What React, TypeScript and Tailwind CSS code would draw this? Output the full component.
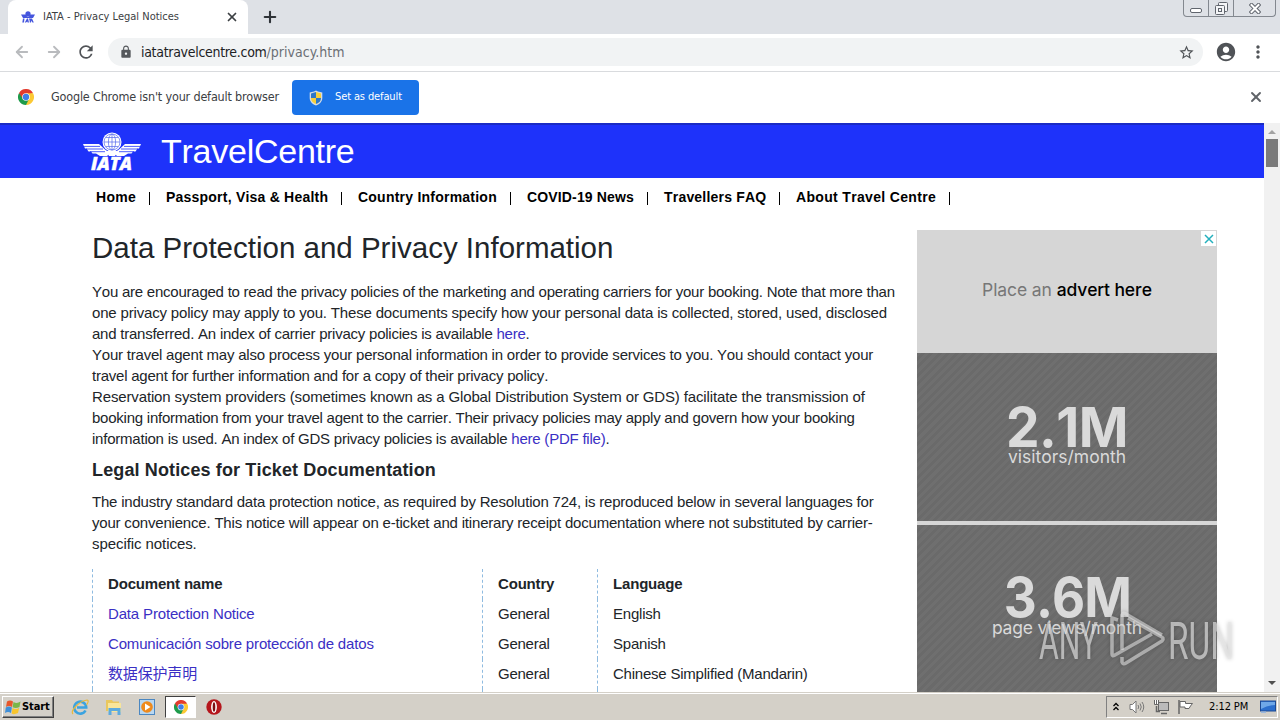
import { ArrowLeft, ArrowRight, Plus, X } from "lucide-react";
import { MdAccountCircle, MdLock, MdMoreVert, MdRefresh, MdStarBorder } from "react-icons/md";

const navItems = [
  { label: "Home", className: "w-[70px] tracking-[0.28px]" },
  { label: "Passport, Visa & Health", className: "w-[192px] tracking-[0.22px]" },
  { label: "Country Information", className: "w-[169px] tracking-[0.23px]" },
  { label: "COVID-19 News", className: "w-[137px] tracking-[0.15px]" },
  { label: "Travellers FAQ", className: "w-[132px] tracking-[0.2px]" },
  { label: "About Travel Centre", className: "w-[170px] tracking-[0.33px]" },
];

const rows = [
  { name: "Data Protection Notice", country: "General", language: "English" },
  { name: "Comunicación sobre protección de datos", country: "General", language: "Spanish" },
  { name: "数据保护声明", country: "General", language: "Chinese Simplified (Mandarin)" },
];

function ChromeLogo({ className }: { className: string }) {
  return (
    <svg viewBox="0 0 48 48" className={className}>
      <path d="M24 24 3.2 12A24 24 0 0 1 44.8 12Z" fill="#e33b2e" />
      <path d="M24 24 44.8 12A24 24 0 0 1 24 48Z" fill="#fcc934" />
      <path d="M24 24 24 48A24 24 0 0 1 3.2 12Z" fill="#1e9b4b" />
      <path d="M24 13H44.8L34 30Z" fill="#fcc934" />
      <path d="M14.5 29.5 3.2 12 24 13Z" fill="#e33b2e" />
      <path d="M33.5 29.5 24 48 14.5 29.5Z" fill="#1e9b4b" />
      <circle cx="24" cy="24" r="11.5" fill="#fff" />
      <circle cx="24" cy="24" r="9.5" fill="#3f7ee8" />
    </svg>
  );
}

function IataLogo({ className }: { className: string }) {
  return (
    <svg viewBox="0 0 58 40" className={className}>
      <g fill="#fff">
        <path d="M0 12H16L22 17.5 27 21 24 24H17L13 21.500H9.500L8 19.500H5.500L3.500 16.500H2Z" />
        <path d="M58 12H42L36 17.5 31 21 34 24H41L45 21.500H48.500L50 19.500H52.500L54.500 16.500H56Z" />
        <circle cx="29" cy="10" r="9.5" />
        <path d="M23 19H35L32 24H26Z" />
      </g>
      <g fill="none" stroke="#5468ec" strokeWidth="0.7">
        <circle cx="29" cy="10" r="8" />
        <ellipse cx="29" cy="10" rx="3.6" ry="8" />
        <path d="M29 2V18M21 10H37M23 5.5H35M23 14.5H35" />
      </g>
      <path d="M1 14.400H17M3 17H20M7 19.700H22M57 14.400H41M55 17H38M51 19.700H36" stroke="#1e32fa" strokeWidth="0.8" />
      <text
        x="8"
        y="38"
        textLength="41"
        lengthAdjust="spacingAndGlyphs"
        fill="#fff"
        stroke="#fff"
        strokeWidth="0.4"
        className="font-['Open_Sans',sans-serif] text-[17px] font-extrabold italic"
      >
        IATA
      </text>
    </svg>
  );
}

function TabIcon() {
  return (
    <svg viewBox="0 0 16 12" className="h-3 w-4" fill="#4455dd">
      <path d="M1 3.5H6L7 5.5H9L10 3.5H15L13 7H3Z" />
      <circle cx="8" cy="2.8" r="2.6" />
      <path d="M3 7.5H4.5L4 11.5H2.3ZM7 7.5H8L9 11.5H7.6L7.3 10.5 6 11.5H4.8ZM8.8 7.5H12L13.8 11.5H12.4L11.4 9.5 11 11.5H9.8L9.5 9Z" />
    </svg>
  );
}

function ShieldIcon() {
  return (
    <svg viewBox="0 0 14 16" className="h-4 w-3.5">
      <path d="M7 .5 9 1.500 13.3 2.5V8C13.3 12 10 14.5 7 15.6 4 14.5.7 12 .7 8V2.5L5 1.500Z" fill="#d6dce4" />
      <path d="M7 2V8H2V3.5Z" fill="#2d77c9" />
      <path d="M7 2V8H12V3.5Z" fill="#f6cf3c" />
      <path d="M7 14V8H2C2 11.5 4.5 13 7 14Z" fill="#f6cf3c" />
      <path d="M7 14V8H12C12 11.5 9.500 13 7 14Z" fill="#2d77c9" />
    </svg>
  );
}

function WindowButtons() {
  return (
    <div className="absolute top-0 right-[4px] flex h-[17px] w-[93px] rounded-b-[4px] border border-t-0 border-[#83888f]">
      <div className="flex w-[25px] items-end justify-center border-r border-[#83888f] pb-[3px]">
        <div className="h-[5px] w-3 rounded-[2px] border border-[#60656d] bg-white" />
      </div>
      <div className="flex w-[25px] items-center justify-center border-r border-[#83888f]">
        <svg viewBox="0 0 13 13" className="h-[13px] w-[13px]" fill="#f4f5f7" stroke="#60656d">
          <rect x="3.500" y=".5" width="9" height="9" rx="1" />
          <rect x=".5" y="3.500" width="9" height="9" rx="1" />
          <rect x="3.500" y="6.500" width="3" height="3" />
        </svg>
      </div>
      <div className="flex flex-1 items-center justify-center">
        <svg viewBox="0 0 12 11" className="h-[11px] w-3">
          <path d="M2.500 2 9.500 9M9.500 2 2.500 9" stroke="#60656d" strokeWidth="4" strokeLinecap="square" />
          <path d="M2.500 2 9.500 9M9.500 2 2.500 9" stroke="#fff" strokeWidth="2" strokeLinecap="square" />
        </svg>
      </div>
    </div>
  );
}

function BrowserChrome() {
  return (
    <div className="shrink-0">
      <div className="relative flex h-[34px] bg-[#dee1e6]">
        <div className="ml-2 flex w-[240px] items-center rounded-t-lg bg-white pl-3">
          <TabIcon />
          <span className="ml-[7px] flex-1 text-[11px] whitespace-nowrap text-[#3c4043]">
            IATA - Privacy Legal Notices
          </span>
          <X className="mr-[9px] h-[14px] w-[14px] text-[#3c4043]" strokeWidth={3} />
        </div>
        <Plus className="mt-2 ml-[13px] h-[18px] w-[18px] text-[#2f3338]" strokeWidth={2.800} />
        <WindowButtons />
      </div>

      <div className="flex h-[38px] items-center border-b border-[#d9dbde] bg-white pb-px">
        <ArrowLeft className="ml-[13px] h-[18px] w-[18px] text-[#b9bbbe]" strokeWidth={2.4} />
        <ArrowRight className="ml-[14px] h-[18px] w-[18px] text-[#b9bbbe]" strokeWidth={2.4} />
        <MdRefresh className="ml-[13px] h-5 w-5 text-[#505357]" />
        <div className="ml-3 flex h-7 w-[1095px] items-center rounded-full bg-[#f1f3f4]">
          <MdLock className="ml-[11px] h-[14px] w-[14px] text-[#55585c]" />
          <span className="ml-2 flex-1 text-[14px] tracking-[-0.3px] whitespace-nowrap text-[#202124]">
            iatatravelcentre.com<span className="tracking-[0.02px] text-[#6b6f74]">/privacy.htm</span>
          </span>
          <MdStarBorder className="mr-[8px] h-[17px] w-[17px] text-[#505357]" />
        </div>
        <MdAccountCircle className="ml-3 h-[22px] w-[22px] text-[#505357]" />
        <MdMoreVert className="ml-[11px] h-5 w-5 text-[#505357]" />
      </div>

      <div className="flex h-[51px] items-center bg-white pb-px">
        <ChromeLogo className="ml-[18px] h-4 w-4" />
        <span className="ml-[17px] w-[241px] text-[12.500px] tracking-[-0.18px] whitespace-nowrap text-[#3c4043]">
          Google Chrome isn't your default browser
        </span>
        <button className="mt-px flex h-[35px] w-[127px] items-center rounded-[4px] bg-[#1a73e8] pl-[17px] text-white">
          <ShieldIcon />
          <span className="ml-3 text-[11px] tracking-[-0.12px] whitespace-nowrap">Set as default</span>
        </button>
        <X className="mr-[16px] ml-auto h-4 w-4 text-[#5f6368]" strokeWidth={2.800} />
      </div>
    </div>
  );
}

function Advert() {
  return (
    <div className="mt-[52px] h-[462px] w-[300px] shrink-0 overflow-hidden bg-[#d6d6d6] font-['Inter',sans-serif]">
      <div className="relative flex h-[123px] items-center justify-center pb-[2px] text-[17.500px] whitespace-nowrap text-[#777]">
        <span className="tracking-[-0.1px]">
          Place an <span className="font-medium text-black">advert here</span>
        </span>
        <div className="absolute top-px right-px flex h-[15px] w-[15px] items-center justify-center bg-white">
          <svg viewBox="0 0 10 10" className="h-[10px] w-[10px]">
            <path d="M1 1 9 9M9 1 1 9" stroke="#24b0bd" strokeWidth="1.5" />
          </svg>
        </div>
      </div>
      <div className="mb-1 flex h-[168px] flex-col items-center bg-[repeating-linear-gradient(135deg,#6f6f6f_0_3px,#6a6a6a_3px_6px)] pt-[55px] text-[#dadada]">
        <div className="scale-x-[0.97] text-[55px] leading-[39px] font-bold tracking-[-0.5px]">2.1M</div>
        <div className="text-[17.500px] leading-5">visitors/month</div>
      </div>
      <div className="flex h-[168px] flex-col items-center bg-[repeating-linear-gradient(135deg,#6f6f6f_0_3px,#6a6a6a_3px_6px)] pt-[53px] text-[#dadada]">
        <div className="scale-x-[0.93] text-[55px] leading-[39px] font-bold tracking-[-1px]">3.6M</div>
        <div className="text-[17.500px] leading-[22px] tracking-[-0.17px]">page views/month</div>
      </div>
    </div>
  );
}

function Scrollbar() {
  return (
    <div className="flex w-4 flex-col items-center bg-[#f1f1f1]">
      <svg viewBox="0 0 16 16" className="h-4 w-4">
        <path d="M4 11 8 7 12 11Z" fill="#a3a3a3" />
      </svg>
      <div className="h-7 w-3 bg-[#7b7b7b]" />
      <svg viewBox="0 0 16 16" className="mt-auto h-4 w-4">
        <path d="M4 5 8 9 12 5Z" fill="#505050" />
      </svg>
    </div>
  );
}

function Watermark() {
  return (
    <svg
      viewBox="0 0 200 66"
      className="absolute top-[606px] left-[1036px] h-[66px] w-[200px] overflow-visible [filter:drop-shadow(0_0_2px_rgba(0,0,0,0.35))]"
    >
      <g fill="#e6e6e6" fillOpacity="0.65" className="font-['Roboto',sans-serif] text-[52px] font-normal">
        <text x="3" y="53" textLength="59" lengthAdjust="spacingAndGlyphs">ANY</text>
        <text x="132" y="53" textLength="66" lengthAdjust="spacingAndGlyphs">RUN</text>
      </g>
      <g fill="none" stroke="#e0e0e0" strokeOpacity="0.6" strokeWidth="3.500" strokeLinejoin="round">
        <path d="M86 44V9Q87 6 90 8L126 29" />
        <path d="M82 14 76 12V48Q76 51 79 49L116 28" />
        <path d="M86 51V56Q87 59 90 57L126 35Q129 32 124 30L92 12" />
      </g>
    </svg>
  );
}

function WebPage() {
  return (
    <div className="flex min-h-0 flex-1 overflow-hidden">
      <div className="min-w-0 flex-1 font-['Liberation_Sans',Arial,sans-serif] [font-kerning:none]">
        <header className="flex h-[55px] items-center border-t-2 border-[#1a2bc4] bg-[#1e32fa]">
          <IataLogo className="ml-[83px] h-10 w-[58px] overflow-visible" />
          <span className="ml-5 text-[34px] tracking-[-0.25px] text-white">TravelCentre</span>
        </header>
        <div className="flex pl-20">
          <div className="w-[837px] shrink-0">
            <nav className="flex h-[40px] items-center whitespace-nowrap">
              {navItems.map((item) => (
                <a key={item.label} className={`h-[13px] shrink-0 border-r border-black pl-4 text-[14px] leading-[10px] font-bold text-black ${item.className}`}>
                  {item.label}
                </a>
              ))}
            </nav>
            <main className="pl-3 text-[15px] leading-[21px] tracking-[-0.18px] whitespace-nowrap text-[#212529]">
              <h1 className="mt-3 text-[29.500px] leading-9 tracking-normal">Data Protection and Privacy Information</h1>
              <p className="mt-[15px]">
                <span className="block tracking-[-0.235px]">You are encouraged to read the privacy policies of the marketing and operating carriers for your booking. Note that more than</span>
                <span className="block tracking-[-0.17px]">one privacy policy may apply to you. These documents specify how your personal data is collected, stored, used, disclosed</span>
                <span className="block tracking-[-0.235px]">and transferred. An index of carrier privacy policies is available <a className="text-[#3a2fc4]">here</a>.</span>
                <span className="block tracking-[-0.215px]">Your travel agent may also process your personal information in order to provide services to you. You should contact your</span>
                <span className="block tracking-[-0.23px]">travel agent for further information and for a copy of their privacy policy.</span>
                <span className="block tracking-[-0.137px]">Reservation system providers (sometimes known as a Global Distribution System or GDS) facilitate the transmission of</span>
                <span className="block tracking-[-0.24px]">booking information from your travel agent to the carrier. Their privacy policies may apply and govern how your booking</span>
                <span className="block tracking-[-0.225px]">information is used. An index of GDS privacy policies is available <a className="text-[#3a2fc4]">here (PDF file)</a>.</span>
              </p>
              <h2 className="mt-[10px] text-[18px] leading-[22px] font-bold tracking-[0.13px]">Legal Notices for Ticket Documentation</h2>
              <p className="mt-[10px]">
                <span className="block tracking-[-0.205px]">The industry standard data protection notice, as required by Resolution 724, is reproduced below in several languages for</span>
                <span className="block tracking-[-0.195px]">your convenience. This notice will appear on e-ticket and itinerary receipt documentation where not substituted by carrier-</span>
                <span className="block tracking-[-0.07px]">specific notices.</span>
              </p>
              <table className="mt-[15px] border-collapse text-left leading-[30px]">
                <thead>
                  <tr>
                    <th className="w-[390px] border-l border-dashed border-[#8fbbe0] p-0 pl-[15px]">Document name</th>
                    <th className="w-[115px] border-l border-dashed border-[#8fbbe0] p-0 pl-[15px]">Country</th>
                    <th className="border-l border-dashed border-[#8fbbe0] p-0 pl-[15px]">Language</th>
                  </tr>
                </thead>
                <tbody>
                  {rows.map((row) => (
                    <tr key={row.name} className="h-[30px]">
                      <td className="border-l border-dashed border-[#8fbbe0] p-0 pl-[15px] font-['Liberation_Sans','Noto_Sans_CJK_SC',sans-serif] tracking-[-0.16px] text-[#3a2fc4]">{row.name}</td>
                      <td className="border-l border-dashed border-[#8fbbe0] p-0 pl-[15px] tracking-[-0.25px]">{row.country}</td>
                      <td className="border-l border-dashed border-[#8fbbe0] p-0 pl-[15px] tracking-[-0.22px]">{row.language}</td>
                    </tr>
                  ))}
                  {/* next row, clipped by the taskbar */}
                  <tr className="h-[30px]">
                    <td className="border-l border-dashed border-[#8fbbe0]" />
                    <td className="border-l border-dashed border-[#8fbbe0]" />
                    <td className="border-l border-dashed border-[#8fbbe0]" />
                  </tr>
                </tbody>
              </table>
            </main>
          </div>
          <Advert />
        </div>
      </div>
      <Scrollbar />
    </div>
  );
}

function Taskbar() {
  return (
    <div className="flex h-7 shrink-0 items-center border-t border-[#d4d0c8] bg-[#d4d0c8] pt-px shadow-[inset_0_1px_0_#fff]">
      <div className="ml-[2px] flex h-[22px] w-[52px] items-center border border-t-white border-r-[#404040] border-b-[#404040] border-l-white pl-[2px] shadow-[inset_-1px_-1px_0_#808080]">
        <svg viewBox="0 0 16 16" className="h-4 w-4">
          <path d="M2 2.500Q5 .5 8 2.500L7 8Q4 6 1 8Z" fill="#e8572b" />
          <path d="M8.500 3Q12 5 15.500 2.500L14.500 8Q11 10 7.600 8.300Z" fill="#7ab648" />
          <path d="M.8 8.500Q4 6.500 6.900 8.500L6 14Q3 12 0 14Z" fill="#3f8fd8" />
          <path d="M7.500 9Q11 11 14.200 8.700L13 14Q9 16 6.600 14.500Z" fill="#f8c52d" />
        </svg>
        <span className="ml-px text-[11px] font-bold tracking-[-0.1px] text-black">Start</span>
      </div>

      <svg viewBox="0 0 18 18" className="ml-[17px] h-[18px] w-[18px]" fill="none">
        <path d="M14.500 12.500A6 6 0 1 1 15.200 9.500H6" stroke="#3ba3e0" strokeWidth="2.600" />
        <path d="M2 16C-1 13 8 3 16 2 18 2 17 5 15.500 7" stroke="#e9b93b" strokeWidth="1.200" />
      </svg>
      <svg viewBox="0 0 18 18" className="ml-4 h-[18px] w-[18px]">
        <path d="M1 2H7L8 3.500H14V13H1Z" fill="#e9c75e" />
        <path d="M3 5H16V14H3Z" fill="#f8e59a" />
        <path d="M3.500 17V10H15.500V17H12.500V13H6.500V17Z" fill="#5caade" />
      </svg>
      <svg viewBox="0 0 16 16" className="ml-4 h-4 w-4">
        <rect x=".5" y=".5" width="15" height="15" fill="#b8d7f1" stroke="#4b87c1" />
        <circle cx="8" cy="8" r="5.800" fill="#ee8a1d" />
        <path d="M6 4.500 11.500 8 6 11.500Z" fill="#fff" />
      </svg>
      <div className="ml-[10px] flex h-[22px] w-[31px] items-center justify-center border border-t-[#404040] border-r-white border-b-white border-l-[#404040] bg-white">
        <ChromeLogo className="h-[14px] w-[14px]" />
      </div>
      <svg viewBox="0 0 16 16" className="ml-[10px] h-4 w-4">
        <circle cx="8" cy="8" r="7.700" fill="#b5161c" />
        <ellipse cx="8" cy="8" rx="2.900" ry="6" fill="#fff" />
        <ellipse cx="8" cy="8" rx="1.300" ry="4.800" fill="#7c0d12" />
      </svg>

      <div className="mr-[2px] ml-auto flex h-[22px] w-[172px] items-center border border-t-[#808080] border-r-white border-b-white border-l-[#808080]">
        <svg viewBox="0 0 6 9" className="mb-[2px] ml-[6px] h-[9px] w-[6px] shrink-0" fill="none" stroke="#000" strokeWidth="1.300">
          <path d="M.5 4 3 1.500 5.500 4M.5 8 3 5.500 5.500 8" />
        </svg>
        <svg viewBox="0 0 16 16" className="ml-[10px] h-4 w-4 shrink-0" fill="#fff" stroke="#777">
          <path d="M1 5.500H3.500L7 2V14L3.500 10.500H1Z" />
          <path d="M9 6Q10.500 8 9 10M11 4.500Q13.500 8 11 11.500M13 3Q16.500 8 13 13" fill="none" />
        </svg>
        <svg viewBox="0 0 17 16" className="ml-2 h-4 w-[17px] shrink-0" fill="#fff" stroke="#666">
          <rect x="5.500" y="3.500" width="10" height="8" fill="#bbb" />
          <path d="M8 14.500H14M3.500 7V12.500H7" fill="none" strokeWidth="1.500" />
          <path d="M1.500 1V5.500H5.500V1M3.500 1V5" />
        </svg>
        <svg viewBox="0 0 17 16" className="ml-[7px] h-4 w-[17px] shrink-0" fill="#fff" stroke="#666">
          <path d="M2 15V1" fill="none" strokeWidth="1.500" />
          <path d="M3 2.500H8.500V4.500H15.500L13.500 7 12 9.500H8V8H3Z" />
        </svg>
        <span className="ml-[15px] w-[51px] shrink-0 text-[11px] tracking-[-0.1px] whitespace-nowrap text-black">2:12 PM</span>
        <svg viewBox="0 0 16 14" className="h-[14px] w-4 shrink-0">
          <rect x=".5" y="1" width="15" height="10" fill="#2c6fcd" stroke="#1d4a93" />
          <path d="M1 2H15V5Q8 5 1 9Z" fill="#6fa8e8" />
          <rect x="1" y="11.500" width="5" height="1.500" fill="#9db9dd" />
        </svg>
      </div>
    </div>
  );
}

export default function App() {
  return (
    <div className="relative flex h-[720px] w-[1280px] flex-col overflow-hidden bg-white font-['DejaVu_Sans_Condensed','DejaVu_Sans',sans-serif]">
      <BrowserChrome />
      <WebPage />
      <Taskbar />
      <Watermark />
    </div>
  );
}
